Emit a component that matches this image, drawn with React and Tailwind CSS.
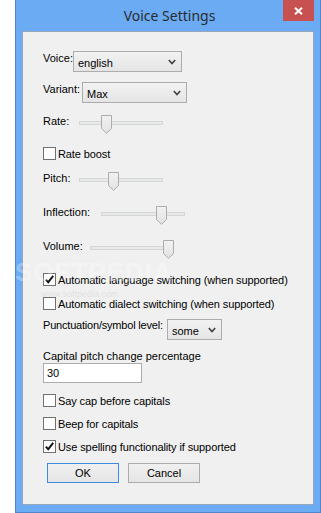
import React from "react";

const font = { fontFamily: '"Liberation Sans", Arial, sans-serif' };

function Chevron() {
  return (
    <svg width="8" height="6" viewBox="0 0 8 6" className="shrink-0">
      <path d="M0.8 1 L4 4.5 L7.2 1" fill="none" stroke="#404040" strokeWidth="1.6" />
    </svg>
  );
}

function Combo({ value, className }) {
  return (
    <div
      className={`h-[21px] flex items-center justify-between pl-[4px] pr-[5px] border border-[#acacac] bg-gradient-to-b from-[#f2f2f2] to-[#e5e5e5] shrink-0 ${className}`}
    >
      <span className="leading-[14px] pt-[2px]">{value}</span>
      <Chevron />
    </div>
  );
}

function Check({ checked, label, className = "" }) {
  return (
    <div className={`flex items-center h-[13px] whitespace-nowrap ${className}`}>
      <div className="w-[13px] h-[13px] border border-[#707070] bg-white flex items-center justify-center shrink-0">
        {checked && (
          <svg width="11" height="11" viewBox="0 0 11 11">
            <path d="M1.8 5.6 L4.2 8.2 L9.2 1.8" fill="none" stroke="#111" strokeWidth="1.9" />
          </svg>
        )}
      </div>
      <span className="ml-[2px] leading-[14px] tracking-[-0.1px]">{label}</span>
    </div>
  );
}

function Slider({ label, labelW, thumb, className = "" }) {
  return (
    <div className={`flex items-start h-[19px] ${className}`}>
      <span className="leading-[14px] mt-[-1px] shrink-0 whitespace-nowrap" style={{ width: labelW }}>
        {label}
      </span>
      <div className="relative w-[84px] h-[19px]">
        <div className="mt-[6px] h-[4px] bg-[#e7eaea] border border-[#d6d6d6]" />
        <svg
          width="11"
          height="19"
          viewBox="0 0 11 19"
          className="absolute top-0"
          style={{ left: thumb }}
        >
          <defs>
            <linearGradient id="th" x1="0" y1="0" x2="0" y2="1">
              <stop offset="0" stopColor="#f2f2f2" />
              <stop offset="1" stopColor="#e2e2e2" />
            </linearGradient>
          </defs>
          <path d="M0.5 0.5 H10.5 V13.5 L5.5 18.3 L0.5 13.5 Z" fill="url(#th)" stroke="#acacac" />
        </svg>
      </div>
    </div>
  );
}

export default function App() {
  return (
    <div className="w-[321px] h-[513px] bg-white relative overflow-hidden text-[11px] text-black" style={font}>
      <div className="ml-[15px] w-[306px] h-[513px] bg-[#6aabf3] border-x border-b border-[#4f86cc] flex flex-col relative">
        {/* title bar */}
        <div className="h-[31px] flex items-start justify-center">
          <span
            className="text-[14px] text-[#2b2b2b] mt-[5px] ml-[3px]"
            style={{ fontFamily: '"Noto Sans", "Open Sans", sans-serif' }}
          >
            Voice Settings
          </span>
          <div className="absolute top-0 right-[6px] w-[31px] h-[21px] bg-[#c75050] flex items-center justify-center">
            <svg width="9" height="8" viewBox="0 0 9 8">
              <path d="M1 0.8 L8 7.2 M8 0.8 L1 7.2" stroke="#fff" strokeWidth="2" />
            </svg>
          </div>
        </div>

        {/* client area */}
        <div className="mx-[6px] h-[474px] bg-[#f0f0f0] border border-[#97a6b9] pl-[20px] pt-[19px] flex flex-col items-start">
          <div className="flex items-start">
            <span className="w-[30px] leading-[14px] shrink-0">Voice:</span>
            <Combo value="english" className="w-[109px]" />
          </div>
          <div className="flex items-start mt-[10px]">
            <span className="w-[39px] leading-[14px] shrink-0">Variant:</span>
            <Combo value="Max" className="w-[105px]" />
          </div>

          <Slider label="Rate:" labelW={36} thumb={22} className="mt-[12px]" />
          <Check label="Rate boost" className="mt-[13px]" />
          <Slider label="Pitch:" labelW={36} thumb={29} className="mt-[12px]" />
          <Slider label="Inflection:" labelW={58} thumb={55} className="mt-[15px]" />
          <Slider label="Volume:" labelW={47} thumb={73} className="mt-[15px]" />

          <Check checked label="Automatic language switching (when supported)" className="mt-[14px]" />
          <Check label="Automatic dialect switching (when supported)" className="mt-[11px]" />

          <div className="flex items-start mt-[9px]">
            <span className="w-[124px] leading-[14px] mt-[-1px] whitespace-nowrap shrink-0 tracking-[-0.2px]">
              Punctuation/symbol level:
            </span>
            <Combo value="some" className="w-[55px]" />
          </div>

          <span className="mt-[10px] leading-[13px] whitespace-nowrap">Capital pitch change percentage</span>
          <div className="w-[99px] h-[20px] bg-white border border-[#abadb3] pl-[3px] flex items-center">
            <span className="leading-[14px]">30</span>
          </div>

          <Check label="Say cap before capitals" className="mt-[11px]" />
          <Check label="Beep for capitals" className="mt-[10px]" />
          <Check checked label="Use spelling functionality if supported" className="mt-[10px]" />

          <div className="flex mt-[10px] ml-[4px] gap-[9px]">
            <div className="w-[72px] h-[20px] border border-[#3c8ce0] bg-gradient-to-b from-[#f0f0f0] to-[#e5e5e5] flex items-center justify-center">
              OK
            </div>
            <div className="w-[72px] h-[20px] border border-[#acacac] bg-gradient-to-b from-[#f0f0f0] to-[#e5e5e5] flex items-center justify-center">
              Cancel
            </div>
          </div>
        </div>
      </div>

      {/* watermark */}
      <div className="absolute left-[15px] top-[259px] pointer-events-none select-none">
        <div className="text-[26px] font-bold tracking-[1px] leading-[26px] text-white/30">
          SOFTPEDIA<span className="text-[8px] align-top">™</span>
        </div>
        <div className="ml-[26px] mt-[4px] text-[9px] leading-[10px] text-[#999]/20">www.softpedia.com</div>
      </div>
    </div>
  );
}
